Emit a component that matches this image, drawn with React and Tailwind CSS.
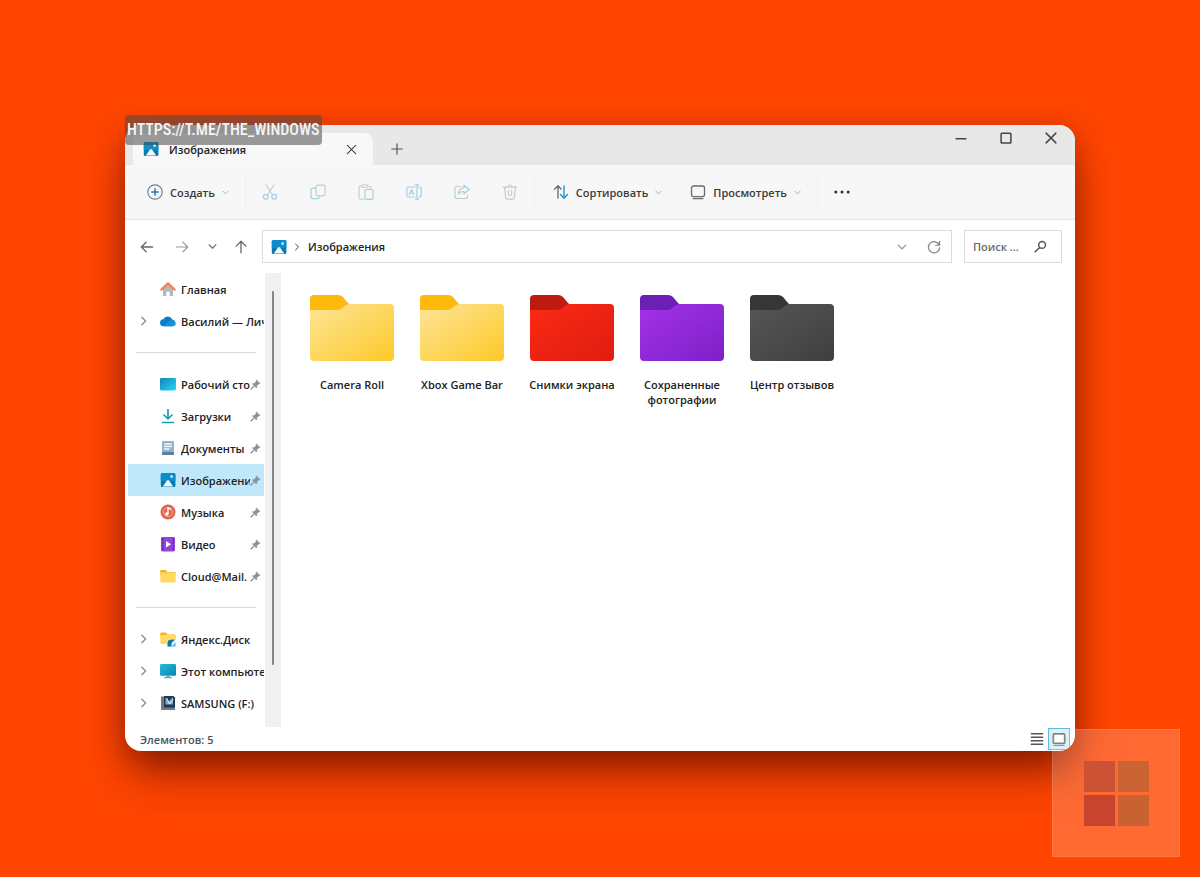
import React from "react";

function Icon({ size = 16, children, className = "" }) {
  return (
    <svg
      width={size}
      height={size}
      viewBox="0 0 16 16"
      fill="none"
      strokeLinecap="round"
      strokeLinejoin="round"
      aria-hidden="true"
      className={"shrink-0 " + className}
    >
      {children}
    </svg>
  );
}

const Chevron = ({ size = 7, className = "text-[#ababab]" }) => (
  <Icon size={size} className={className}>
    <path d="M2 5l6 6 6-6" stroke="currentColor" strokeWidth="2.2" />
  </Icon>
);

const ChevronRight = ({ size = 10, className = "text-[#8a8a8a]" }) => (
  <Icon size={size} className={className}>
    <path d="M3 2l6 6-6 6" stroke="currentColor" strokeWidth="2" />
  </Icon>
);

const PicturesIcon = () => (
  <Icon>
    <rect x="0.8" y="1" width="14.6" height="14" rx="1.6" fill="#0878b4" />
    <path d="M0.8 9V2.6Q.8 1 2.4 1H13.8Q15.4 1 15.4 2.6V9z" fill="#0a8fcb" />
    <path d="M2.800 14.400L7 8.600Q8 7.500 9 8.600L13.200 14.400z" fill="#f2fbff" />
    <circle cx="11.6" cy="4.6" r="1.3" fill="#d8f2ff" />
  </Icon>
);

const HomeIcon = () => (
  <Icon>
    <path d="M3 7.5V15h3.6v-4.2h2.8V15H13V7.5L8 3z" fill="#b5b9bf" />
    <path d="M6.6 15v-4.2h2.8V15z" fill="#fff" />
    <path d="M1.4 8.6L8 2.4l6.6 6.2" stroke="#ee8450" strokeWidth="2.3" />
  </Icon>
);

const CloudIcon = () => (
  <Icon>
    <path d="M3.8 13.2a3.5 3.5 0 0 1-.5-7A5 5 0 0 1 12.300 6.400 3.500 3.500 0 0 1 12.600 13.200z" fill="#0a7fc8" />
    <path d="M3 13.200L10 7.500A4 4 0 0 1 15.800 10.200 3.200 3.200 0 0 1 12.600 13.200z" fill="#1492da" />
  </Icon>
);

const DesktopIcon = () => (
  <Icon>
    <defs>
      <linearGradient id="desk" x1="0" y1="0" x2="1" y2="1">
        <stop offset="0" stopColor="#0c86b8" />
        <stop offset="1" stopColor="#2ed3f2" />
      </linearGradient>
    </defs>
    <rect x="0" y="2" width="16" height="12.4" rx="1.4" fill="url(#desk)" />
  </Icon>
);

const DownloadIcon = () => (
  <Icon>
    <path d="M8 1.5v9M4 7l4 4 4-4" stroke="#1a9fae" strokeWidth="1.7" />
    <path d="M2.6 14.500h10.800" stroke="#1a9fae" strokeWidth="1.700" />
  </Icon>
);

const DocumentIcon = () => (
  <Icon>
    <rect x="2" y="1" width="12" height="14" rx="1.2" fill="#8fb3cc" />
    <rect x="2" y="12" width="12" height="3" rx="1" fill="#5d7f9a" />
    <path d="M4.5 4h7M4.5 6.5h7M4.500 9h4.500" stroke="#eef6fb" strokeWidth="1.300" />
  </Icon>
);

const MusicIcon = () => (
  <Icon>
    <circle cx="8" cy="8" r="7.5" fill="#e0654f" />
    <circle cx="8" cy="8" r="4.6" stroke="#f3a795" strokeWidth="1" />
    <path d="M8 9.6V3.8l2.600 1.400" stroke="#fff" strokeWidth="1.400" />
    <circle cx="6.8" cy="10" r="1.7" fill="#fff" />
  </Icon>
);

const VideoIcon = () => (
  <Icon>
    <rect x="1" y="1" width="14" height="14.4" rx="1.4" fill="#9044d8" />
    <path d="M2.8 3v11M13.2 3v11" stroke="#5c1fa6" strokeWidth="1.3" strokeDasharray="1 2.2" />
    <path d="M6 5l5 3.2-5 3.2z" fill="#fff" />
  </Icon>
);

const SmallFolderIcon = () => (
  <Icon>
    <path d="M.3 3Q.3 2 1.3 2H5.800L7.400 4H14.500Q15.600 4 15.600 5V7H.3z" fill="#f2b41d" />
    <rect x=".3" y="4.6" width="15.4" height="9.8" rx="1" fill="#ffd964" />
  </Icon>
);

const YandexIcon = () => (
  <Icon>
    <path d="M.3 2.5Q.3 1.5 1.3 1.5H5.800L7.400 3.500H14.500Q15.600 3.500 15.600 4.500V7H.3z" fill="#f2b41d" />
    <rect x=".3" y="4" width="15.4" height="9" rx="1" fill="#ffd964" />
    <path d="M7 15.800V11.500Q7 8 10.500 8H15.800V15.800z" fill="#e9f5fb" />
    <path d="M7.500 15.600V11.500Q7.800 8.400 11.500 8.400H15.200L11.500 12V15.600z" fill="#1576a8" />
    <path d="M11.500 15.600l4-4v4z" fill="#55b8e0" />
  </Icon>
);

const ComputerIcon = () => (
  <Icon>
    <defs>
      <linearGradient id="pc" x1="0" y1="0" x2="1" y2="1">
        <stop offset="0" stopColor="#27bde0" />
        <stop offset="1" stopColor="#0a84ac" />
      </linearGradient>
    </defs>
    <rect x="0" y="1" width="16" height="11.8" rx="1.2" fill="url(#pc)" />
    <path d="M6 12.800h4v1.400H6z" fill="#6fb6cc" />
    <path d="M4.500 14.700h7" stroke="#3e93ad" strokeWidth="1" />
  </Icon>
);

const DriveIcon = () => (
  <Icon>
    <path d="M1 1.500h3.500v13H1z" fill="#6b7b8c" />
    <path d="M4 1h9.500l1.500 1.500V13H4z" fill="#223850" />
    <path d="M5.500 2l3 4.500 4.500-4.500v7.500H5.500z" fill="#7eaed2" />
    <path d="M1 12.500h14V15H1z" fill="#717d8a" />
    <path d="M7 3.500l2.500 5.500L13 5" stroke="#e3f0fa" strokeWidth="1" />
  </Icon>
);

const PinIcon = () => (
  <Icon size={11} className="text-[#8b9197]">
    <path d="M9.500 1.500l5 5-2 .6-2.600 2.600-.6 3.300L3.500 7l3.300-.6L9 3.500z" fill="currentColor" stroke="currentColor" />
    <path d="M6 10l-4.500 4.500" stroke="currentColor" strokeWidth="1.800" />
  </Icon>
);

const blue = "#a5cfe3";
const grey = "#c3cbd0";

const editTools = [
  {
    label: "Вырезать",
    icon: (
      <>
        <path d="M4 .8l6.300 10M12 .8L5.700 10.800" stroke={grey} strokeWidth="1.100" />
        <circle cx="3.8" cy="12.8" r="2.4" stroke={blue} strokeWidth="1.2" />
        <circle cx="12.2" cy="12.8" r="2.4" stroke={blue} strokeWidth="1.2" />
      </>
    ),
  },
  {
    label: "Копировать",
    icon: (
      <>
        <rect x="6" y="1.2" width="9" height="10.6" rx="1.8" stroke={grey} strokeWidth="1.2" />
        <path d="M5.500 4.200H3Q1 4.200 1 6.200V12.600Q1 14.600 3 14.600H7.500Q9.300 14.600 9.600 12.500" stroke={blue} strokeWidth="1.200" />
      </>
    ),
  },
  {
    label: "Вставить",
    icon: (
      <>
        <path d="M5.500 15.200H2.500Q1 15.200 1 13.700V3.500Q1 2 2.500 2H4M9.500 2H11Q12.500 2 12.500 3.500V4.500" stroke={grey} strokeWidth="1.200" />
        <rect x="4" y=".8" width="5.5" height="2.5" rx="1" stroke={grey} strokeWidth="1.1" />
        <rect x="7" y="5.5" width="8" height="9.9" rx="1.2" stroke={blue} strokeWidth="1.2" />
      </>
    ),
  },
  {
    label: "Переименовать",
    icon: (
      <>
        <path d="M9 3H2.600Q.8 3 .8 4.800v6.400Q.8 13 2.600 13H9M13 3q2.300 0 2.300 2v6q0 2-2.300 2" stroke={blue} strokeWidth="1.200" />
        <path d="M11 .8v14.400M9.500.8h3M9.500 15.200h3" stroke={blue} strokeWidth="1.200" />
        <path d="M3.400 10.500L5.600 5.500l2.200 5M4.200 9h2.800" stroke={blue} strokeWidth="1.200" />
      </>
    ),
  },
  {
    label: "Поделиться",
    icon: (
      <>
        <path d="M6 2.500H3Q1 2.500 1 4.500v8q0 2 2 2h8.500q2 0 2-2V11" stroke={grey} strokeWidth="1.200" />
        <path d="M10 1.200l5.200 4.300L10 9.800V7.500Q6.300 7.300 4.500 10 5 4.200 10 3.700z" stroke={blue} strokeWidth="1.200" />
      </>
    ),
  },
  {
    label: "Удалить",
    icon: (
      <>
        <path d="M1.200 3.200h13.600M5.800 3Q6 1 8 1t2.200 2M2.600 3.400l1 10.200q.2 1.600 1.800 1.600h5.200q1.600 0 1.800-1.600l1-10.200" stroke={grey} strokeWidth="1.200" />
        <path d="M6.300 6.500v3.500q0 1.500 1.700 1.500t1.700-1.500V6.500" stroke={grey} strokeWidth="1.200" />
      </>
    ),
  },
];

const sidebarGroups = [
  [
    { name: "Главная", icon: HomeIcon },
    { name: "Василий — Личное", icon: CloudIcon, expandable: true },
  ],
  [
    { name: "Рабочий сто", icon: DesktopIcon, pinned: true },
    { name: "Загрузки", icon: DownloadIcon, pinned: true },
    { name: "Документы", icon: DocumentIcon, pinned: true },
    { name: "Изображения", icon: PicturesIcon, pinned: true, active: true },
    { name: "Музыка", icon: MusicIcon, pinned: true },
    { name: "Видео", icon: VideoIcon, pinned: true },
    { name: "Cloud@Mail.", icon: SmallFolderIcon, pinned: true },
  ],
  [
    { name: "Яндекс.Диск", icon: YandexIcon, expandable: true },
    { name: "Этот компьюте", icon: ComputerIcon, expandable: true },
    { name: "SAMSUNG (F:)", icon: DriveIcon, expandable: true },
  ],
];

const folders = [
  { name: "Camera Roll", tab: "#fdb90c", from: "#fde598", to: "#fdc928" },
  { name: "Xbox Game Bar", tab: "#fdb90c", from: "#fde598", to: "#fdc928" },
  { name: "Снимки экрана", tab: "#bd1a10", from: "#fb2a14", to: "#df1d10" },
  { name: "Сохраненные фотографии", tab: "#6b1fb4", from: "#a432e6", to: "#7d20c8" },
  { name: "Центр отзывов", tab: "#363636", from: "#565656", to: "#3f3f3f" },
];

function FolderIcon({ id, tab, from, to }) {
  return (
    <svg width="84" height="66" viewBox="0 0 84 66" aria-hidden="true">
      <defs>
        <linearGradient id={id} x1="0" y1="0" x2="1" y2="1">
          <stop offset="0" stopColor={from} />
          <stop offset="1" stopColor={to} />
        </linearGradient>
      </defs>
      <path d="M0 4Q0 0 4 0H28Q31 0 33 2L38 8Q39 9.500 42 9.500V20H0z" fill={tab} />
      <path
        d="M0 15H27Q31 15 33 12.500Q36 9 40 9H80Q84 9 84 13V62Q84 66 80 66H4Q0 66 0 62z"
        fill={"url(#" + id + ")"}
      />
    </svg>
  );
}

function SidebarItem({ item }) {
  const ItemIcon = item.icon;
  return (
    <li>
      <a
        href="#"
        aria-current={item.active ? "page" : undefined}
        className={
          "flex h-8 items-center overflow-hidden pl-3 " + (item.active ? "bg-[#bfe9fb]" : "")
        }
      >
        <span className="flex w-5 shrink-0">{item.expandable && <ChevronRight />}</span>
        <ItemIcon />
        <span className="ml-[5px] min-w-0 flex-1 overflow-hidden whitespace-nowrap">{item.name}</span>
        {item.pinned && (
          <span className="flex w-3.5 shrink-0">
            <PinIcon />
          </span>
        )}
      </a>
    </li>
  );
}

function TitleBar() {
  return (
    <header className="flex h-10 items-start bg-[#e8e8e8] pl-2">
      <div className="mt-2 flex h-8 w-60 items-center rounded-t-lg bg-[#f8f8f8] pr-4 pl-2.5">
        <PicturesIcon />
        <span className="ml-2.5 flex-1 text-[#222]">Изображения</span>
        <button aria-label="Закрыть вкладку" className="flex">
          <Icon size={11} className="text-[#444]">
            <path d="M2 2l12 12M14 2L2 14" stroke="currentColor" strokeWidth="1.6" />
          </Icon>
        </button>
      </div>
      <button aria-label="Новая вкладка" className="mt-2 flex h-8 w-12 items-center justify-center">
        <Icon size={12} className="text-[#555]">
          <path d="M8 1v14M1 8h14" stroke="currentColor" strokeWidth="1.6" />
        </Icon>
      </button>
      <div className="ml-auto flex h-[26px] pr-0.5">
        <button aria-label="Свернуть" className="flex w-[45px] items-center justify-center">
          <Icon size={12} className="text-[#444]">
            <path d="M1.500 9h13" stroke="currentColor" strokeWidth="2" />
          </Icon>
        </button>
        <button aria-label="Развернуть" className="flex w-[45px] items-center justify-center">
          <Icon size={12} className="text-[#444]">
            <rect x="1.5" y="1.5" width="13" height="13" rx="1" stroke="currentColor" strokeWidth="2" />
          </Icon>
        </button>
        <button aria-label="Закрыть" className="flex w-[45px] items-center justify-center">
          <Icon size={12} className="text-[#444]">
            <path d="M1.500 1.500l13 13M14.500 1.500l-13 13" stroke="currentColor" strokeWidth="1.900" />
          </Icon>
        </button>
      </div>
    </header>
  );
}

const Separator = () => <span className="h-8 w-px shrink-0 bg-[#efefef]" />;

function Toolbar() {
  return (
    <div role="toolbar" className="flex h-[55px] items-center border-b border-[#e3e3e3] bg-[#f7f7f7] pl-[22px] text-[#3a3a3a]">
      <button className="flex items-center gap-[7px] pr-4">
        <Icon>
          <circle cx="8" cy="8" r="7.2" stroke="#6c8494" strokeWidth="1.2" />
          <path d="M8 4.800v6.400M4.800 8h6.400" stroke="#1a80b8" strokeWidth="1.500" />
        </Icon>
        <span>Создать</span>
        <Chevron />
      </button>
      <Separator />
      {editTools.map((tool) => (
        <button key={tool.label} aria-label={tool.label} disabled className="flex w-12 shrink-0 justify-center">
          <Icon>{tool.icon}</Icon>
        </button>
      ))}
      <Separator />
      <button className="flex items-center gap-[7px] pr-3.5 pl-[18px]">
        <Icon>
          <path d="M5 14V2M1.400 5.400L5 1.800 8 5" stroke="#5b6770" strokeWidth="1.300" />
          <path d="M11 2v12M7.600 10.600L11 14.200l3.600-3.600" stroke="#1f96cc" strokeWidth="1.400" />
        </Icon>
        <span>Сортировать</span>
        <Chevron />
      </button>
      <button className="flex items-center gap-[7px] pr-4 pl-3.5">
        <Icon>
          <rect x="1.5" y="2" width="13" height="10.6" rx="2" stroke="#6a6a6a" strokeWidth="1.3" />
          <path d="M3 14.600h10" stroke="#6a6a6a" strokeWidth="1.200" />
        </Icon>
        <span>Просмотреть</span>
        <Chevron />
      </button>
      <Separator />
      <button aria-label="Подробнее" className="flex px-4">
        <Icon className="text-[#333]">
          <circle cx="1.8" cy="8" r="1.5" fill="currentColor" />
          <circle cx="8" cy="8" r="1.5" fill="currentColor" />
          <circle cx="14.2" cy="8" r="1.5" fill="currentColor" />
        </Icon>
      </button>
    </div>
  );
}

function AddressRow() {
  return (
    <div className="flex items-center py-2.5 pr-[13px] pl-[15px]">
      <div className="flex w-[122px] shrink-0 items-center text-[#666]">
        <button aria-label="Назад" className="flex w-[35px]">
          <Icon size={14}>
            <path d="M14.500 8H1.500M7 2.500L1.500 8 7 13.500" stroke="currentColor" strokeWidth="1.500" />
          </Icon>
        </button>
        <button aria-label="Вперед" className="flex w-[33px] text-[#999]">
          <Icon size={14}>
            <path d="M1.500 8h13M9 2.500L14.500 8 9 13.500" stroke="currentColor" strokeWidth="1.400" />
          </Icon>
        </button>
        <button aria-label="Последние расположения" className="flex w-[26px]">
          <Chevron size={9} className="text-[#777]" />
        </button>
        <button aria-label="Вверх" className="flex">
          <Icon size={14}>
            <path d="M8 14.500V1.500M2.500 7L8 1.500 13.500 7" stroke="currentColor" strokeWidth="1.500" />
          </Icon>
        </button>
      </div>
      <div className="flex h-[33px] min-w-0 flex-1 items-center border border-[#dcdcdc] px-2 text-[#222]">
        <PicturesIcon />
        <span className="ml-[7px] mr-1.5 flex">
          <ChevronRight size={8} className="text-[#444]" />
        </span>
        <a href="#" className="flex-1">Изображения</a>
        <button aria-label="Предыдущие расположения" className="flex">
          <Chevron size={10} className="text-[#999]" />
        </button>
        <button aria-label="Обновить" className="mr-0.5 ml-5 flex">
          <Icon size={14} className="text-[#808080]">
            <path d="M14 6A6.400 6.400 0 1 0 14.400 9M14.300 1.500V6H10" stroke="currentColor" strokeWidth="1.400" />
          </Icon>
        </button>
      </div>
      <div className="ml-3 flex h-[33px] w-[98px] shrink-0 items-center border border-[#dcdcdc] pr-3.5 pl-2">
        <input
          type="search"
          aria-label="Поиск"
          placeholder="Поиск ..."
          className="w-full min-w-0 flex-1 bg-transparent outline-none placeholder:text-[#6b6b6b]"
        />
        <Icon size={13} className="text-[#555]">
          <circle cx="10" cy="6" r="4.2" stroke="currentColor" strokeWidth="1.8" />
          <path d="M6.600 9.500L1.500 14.500" stroke="currentColor" strokeWidth="1.900" />
        </Icon>
      </div>
    </div>
  );
}

function Sidebar() {
  return (
    <div className="flex shrink-0">
      <nav aria-label="Папки" className="w-[139px] pb-2 pl-[3px] text-[#222]">
        {sidebarGroups.map((group, i) => (
          <React.Fragment key={i}>
            {i > 0 && (
              <div className="flex h-[31px] items-center pr-2 pl-2">
                <hr className="w-full border-[#d9d9d9]" />
              </div>
            )}
            <ul>
              {group.map((item) => (
                <SidebarItem key={item.name} item={item} />
              ))}
            </ul>
          </React.Fragment>
        ))}
      </nav>
      <div className="ml-px flex w-4 justify-center bg-[#f0f0f0] pt-[18px] pb-[62px]">
        <div className="w-0.5 rounded bg-[#858585]" />
      </div>
    </div>
  );
}

function StatusBar() {
  return (
    <footer className="flex h-6 items-center pr-[5px] pl-[15px] text-[#44525f]">
      <span className="flex-1">Элементов: 5</span>
      <button aria-label="Таблица" className="flex px-1">
        <Icon size={14} className="text-[#555]">
          <path d="M1.500 2h13M1.500 6h13M1.500 10h13M1.500 14h13" stroke="currentColor" strokeWidth="1.600" />
        </Icon>
      </button>
      <button
        aria-label="Крупные значки"
        aria-pressed="true"
        className="flex size-[22px] items-center justify-center border border-[#5fb8d8] bg-[#d5edf6]"
      >
        <Icon size={14} className="text-[#666]">
          <rect x="1.5" y="2" width="13" height="11" rx="1" fill="#fff" stroke="currentColor" strokeWidth="2" />
          <path d="M2 15.500h12" stroke="currentColor" />
        </Icon>
      </button>
    </footer>
  );
}

export default function App() {
  return (
    <div className="relative min-h-screen bg-[#ff4500] p-[125px] font-['Open_Sans','Noto_Sans',sans-serif] text-[11px] leading-[15px] font-semibold">
      <div className="relative rounded-2xl shadow-[0_26px_44px_-6px_rgba(50,0,0,0.5),0_6px_30px_rgba(80,10,0,0.3)]">
        <div className="overflow-hidden rounded-2xl bg-white">
          <TitleBar />
          <Toolbar />
          <AddressRow />
          <div className="flex">
            <Sidebar />
            <main className="min-w-0 flex-1 pt-[22px] pl-4">
              <ul className="flex flex-wrap">
                {folders.map((folder, i) => (
                  <li key={folder.name}>
                    <button className="flex w-[110px] flex-col items-center gap-4 px-3 text-[#222]">
                      <FolderIcon id={"folder" + i} tab={folder.tab} from={folder.from} to={folder.to} />
                      <span>{folder.name}</span>
                    </button>
                  </li>
                ))}
              </ul>
            </main>
          </div>
          <StatusBar />
        </div>
        <div className="absolute -top-2.5 left-0 rounded-sm bg-[#4a4a4a]/55 px-0.5 font-['Roboto_Condensed','Roboto',sans-serif] text-[16px] leading-[30px] font-medium whitespace-nowrap text-[#f4f4f4]">
          HTTPS://T.ME/THE_WINDOWS
        </div>
      </div>
      <div className="absolute right-5 bottom-5 flex size-32 items-center justify-center border border-white/10 bg-white/20">
        <svg width="65" height="65" viewBox="0 0 65 65" aria-label="Windows" role="img">
          <rect x="0" y="0" width="31" height="31" fill="#cb5233" />
          <rect x="34" y="0" width="31" height="31" fill="#ca6432" />
          <rect x="0" y="34" width="31" height="31" fill="#c9442f" />
          <rect x="34" y="34" width="31" height="31" fill="#c96231" />
        </svg>
      </div>
    </div>
  );
}
